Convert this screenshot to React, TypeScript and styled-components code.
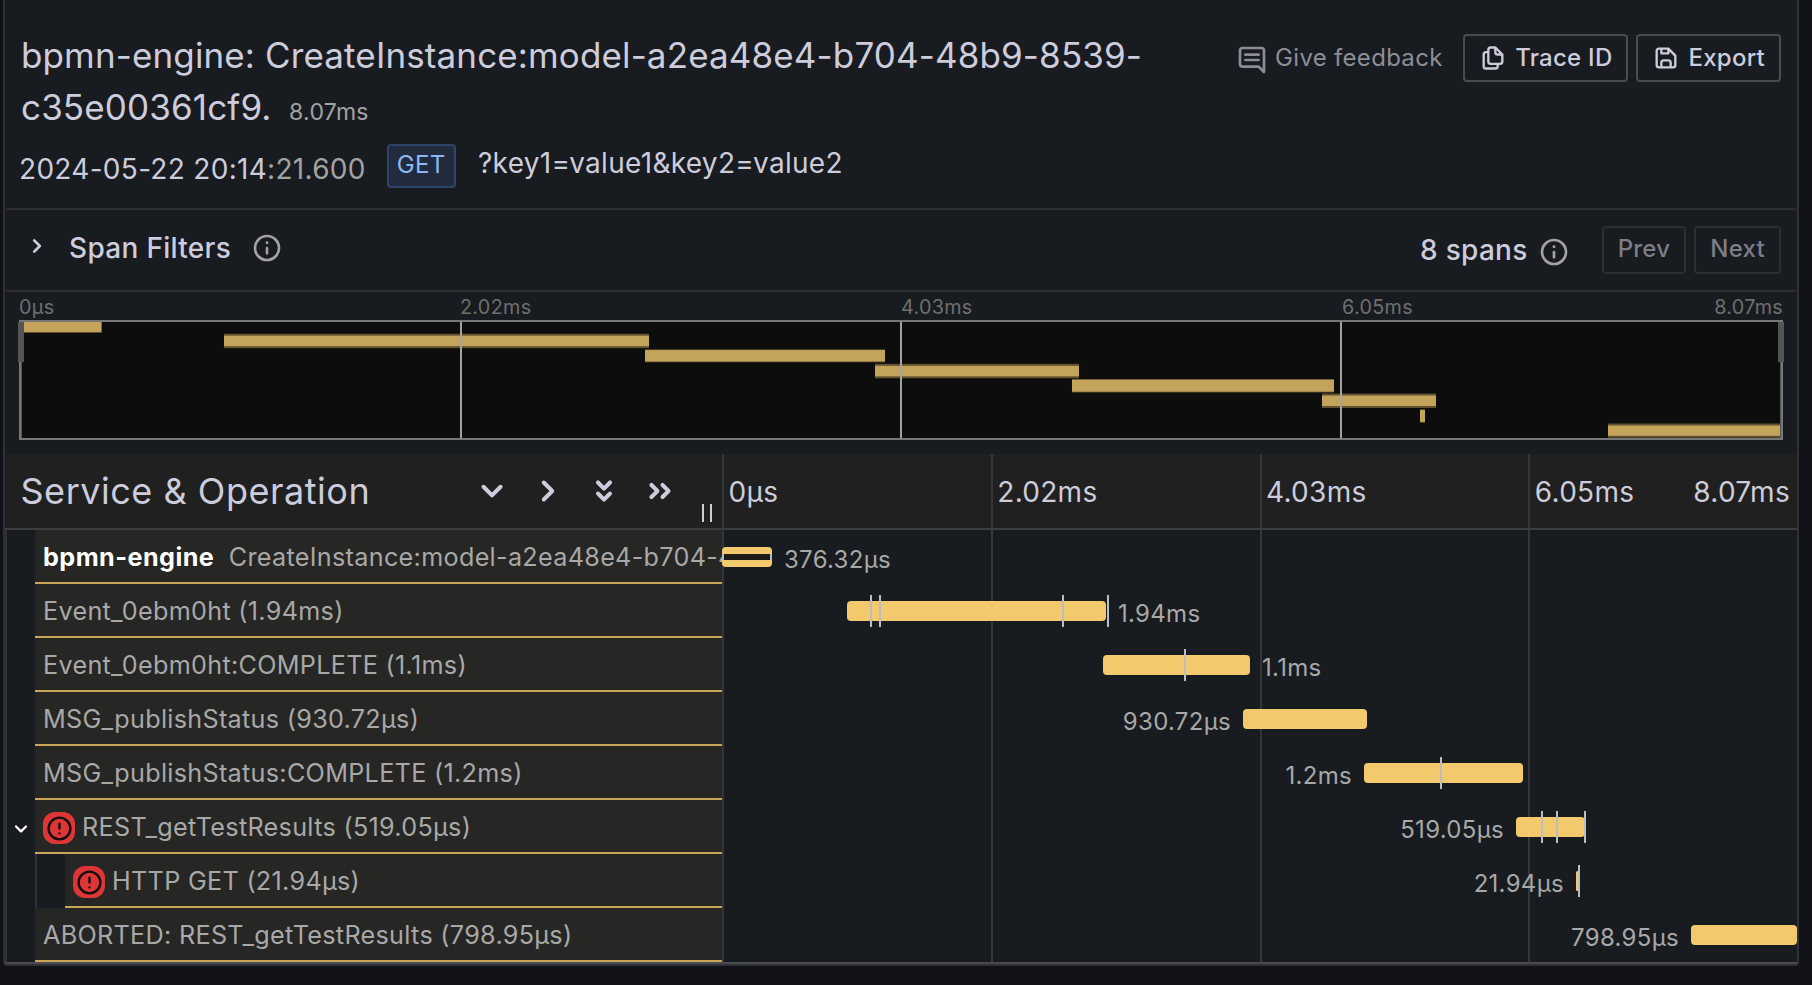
import React from 'react';
import styled, { createGlobalStyle, css } from 'styled-components';

const color = {
  canvas: '#111217',
  panel: '#181b1f',
  border: '#2e3036',
  text: '#ccccdc',
  textSecondary: '#8c8d98',
  muted: '#a3a3a3',
  faint: '#6f6f6f',
  span: '#f2c96d',
  rowBg: '#262624',
  rowLine: '#c9a55a',
  grid: '#353637',
};

const GlobalStyle = createGlobalStyle`
  *, *::before, *::after { box-sizing: border-box; }
  body {
    margin: 0;
    background: ${color.canvas};
    color: ${color.text};
    font-family: Inter, "Liberation Sans", sans-serif;
    font-size: 28px;
    letter-spacing: 0.3px;
    overflow: hidden;
  }
`;

/* ---------- icons ---------- */

const paths = {
  message:
    'M17,7H7A1,1,0,0,0,7,9H17a1,1,0,0,0,0-2Zm0,4H7a1,1,0,0,0,0,2H17a1,1,0,0,0,0-2Zm2-9H5A3,3,0,0,0,2,5V15a3,3,0,0,0,3,3H16.59l3.7,3.71A1,1,0,0,0,21,22a.84.84,0,0,0,.38-.08A1,1,0,0,0,22,21V5A3,3,0,0,0,19,2Zm1,16.59-2.29-2.3A1,1,0,0,0,17,16H5a1,1,0,0,1-1-1V5A1,1,0,0,1,5,4H19a1,1,0,0,1,1,1Z',
  copy:
    'M21,8.94a1.31,1.31,0,0,0-.06-.27l0-.09a1.07,1.07,0,0,0-.19-.28h0l-6-6h0a1.07,1.07,0,0,0-.28-.19.32.32,0,0,0-.09,0A.88.88,0,0,0,14.05,2H10A3,3,0,0,0,7,5V6H6A3,3,0,0,0,3,9V19a3,3,0,0,0,3,3h8a3,3,0,0,0,3-3V18h1a3,3,0,0,0,3-3V9S21,9,21,8.94ZM15,5.41,17.59,8H16a1,1,0,0,1-1-1ZM15,19a1,1,0,0,1-1,1H6a1,1,0,0,1-1-1V9A1,1,0,0,1,6,8H7v7a3,3,0,0,0,3,3h5Zm4-4a1,1,0,0,1-1,1H10a1,1,0,0,1-1-1V5a1,1,0,0,1,1-1h3V7a3,3,0,0,0,3,3h3Z',
  save:
    'M20.71,9.29l-6-6a1,1,0,0,0-.32-.21A1.09,1.09,0,0,0,14,3H6A3,3,0,0,0,3,6V18a3,3,0,0,0,3,3H18a3,3,0,0,0,3-3V10A1,1,0,0,0,20.71,9.29ZM9,5h4V7H9Zm6,14H9V16a1,1,0,0,1,1-1h4a1,1,0,0,1,1,1Zm4-1a1,1,0,0,1-1,1H17V16a3,3,0,0,0-3-3H10a3,3,0,0,0-3,3v3H6a1,1,0,0,1-1-1V6A1,1,0,0,1,6,5H7V8A1,1,0,0,0,8,9h6a1,1,0,0,0,1-1V6.41l4,4Z',
  info:
    'M12,2A10,10,0,1,0,22,12,10,10,0,0,0,12,2Zm0,18a8,8,0,1,1,8-8A8,8,0,0,1,12,20Zm0-9a1,1,0,0,0-1,1v4a1,1,0,0,0,2,0V12A1,1,0,0,0,12,11Zm0-4a1.1,1.1,0,1,0,1.1,1.1A1.1,1.1,0,0,0,12,7Z',
  exclamation:
    'M12,2A10,10,0,1,0,22,12,10,10,0,0,0,12,2Zm0,18a8,8,0,1,1,8-8A8,8,0,0,1,12,20ZM12,7a1,1,0,0,0-1,1v4a1,1,0,0,0,2,0V8A1,1,0,0,0,12,7Zm0,8a1,1,0,1,0,1,1A1,1,0,0,0,12,15Z',
  angleDown:
    'M17,9.17a1,1,0,0,0-1.41,0L12,12.71,8.46,9.17a1,1,0,0,0-1.41,0,1,1,0,0,0,0,1.42l4.24,4.24a1,1,0,0,0,1.42,0L17,10.59A1,1,0,0,0,17,9.17Z',
  angleRight:
    'M14.83,11.29,10.59,7.05a1,1,0,0,0-1.42,0,1,1,0,0,0,0,1.41L12.71,12,9.17,15.54a1,1,0,0,0,0,1.41,1,1,0,0,0,.71.29,1,1,0,0,0,.71-.29l4.24-4.24A1,1,0,0,0,14.83,11.29Z',
  doubleDown:
    'M11.29,11.46a1,1,0,0,0,1.42,0l3-3A1,1,0,1,0,14.29,7L12,9.34,9.71,7A1,1,0,1,0,8.29,8.46Zm3,1.08L12,14.84l-2.29-2.3A1,1,0,0,0,8.29,14l3,3a1,1,0,0,0,1.42,0l3-3a1,1,0,0,0-1.42-1.42Z',
  doubleRight:
    'M8.46,8.29A1,1,0,1,0,7,9.71L9.34,12,7,14.29a1,1,0,1,0,1.42,1.42l3-3a1,1,0,0,0,0-1.42Zm8.5,3-3-3a1,1,0,1,0-1.42,1.42L14.84,12l-2.3,2.29a1,1,0,0,0,0,1.42,1,1,0,0,0,1.42,0l3-3A1,1,0,0,0,17,11.29Z',
};

const Svg = styled.svg`
  display: block;
  flex: none;
  fill: currentColor;
`;

function Icon({ name, size, className }: { name: keyof typeof paths; size: number; className?: string }) {
  return (
    <Svg className={className} width={size} height={size} viewBox="0 0 24 24" aria-hidden="true">
      <path d={paths[name]} />
    </Svg>
  );
}

/* ---------- panel and header ---------- */

const Panel = styled.main`
  width: 1796px;
  height: 966px;
  margin-left: 3px;
  border: 2px solid ${color.border};
  border-top: 0;
  border-radius: 0 0 4px 4px;
  background: ${color.panel};
`;

const Header = styled.header`
  display: flex;
  justify-content: space-between;
  height: 208px;
  padding: 29px 16px 0 14px;
`;

const Heading = styled.div`
  width: 1170px;
`;

const Title = styled.h1`
  margin: 0 0 0 2px;
  font-size: 35px;
  font-weight: 400;
  line-height: 52px;
  letter-spacing: 0.13px;
`;

const TotalDuration = styled.small`
  margin-left: 17.5px;
  font-size: 23px;
  letter-spacing: 0.3px;
  color: ${color.muted};
`;

const Meta = styled.div`
  display: flex;
  align-items: flex-start;
  margin-top: 3px;
  line-height: 44px;
`;

const Timestamp = styled.time`
  margin-top: 6px;
`;

const Seconds = styled.span`
  color: ${color.muted};
`;

const MethodBadge = styled.span`
  height: 44px;
  margin: 3px 22.5px 0 21px;
  padding: 1px 8px 0;
  border: 2px solid #2e4468;
  border-radius: 4px;
  background: #212b3d;
  color: #8ab8f5;
  font-size: 24px;
  line-height: 36px;
`;

const Actions = styled.div`
  display: flex;
  align-items: flex-start;
  gap: 8px;
  padding-top: 5px;
`;

const FeedbackLink = styled.a`
  display: flex;
  align-items: center;
  gap: 7px;
  height: 48px;
  margin-right: 12.5px;
  color: ${color.textSecondary};
  font-size: 24px;
  line-height: 46px;
  svg { margin-top: 4px; }
`;

const Button = styled.button<{ $disabled?: boolean }>`
  display: flex;
  align-items: center;
  gap: 8px;
  height: 48px;
  padding: 0 14px;
  border: 2px solid ${(p) => (p.$disabled ? '#2c2e34' : '#4a4b52')};
  border-radius: 4px;
  background: transparent;
  color: ${(p) => (p.$disabled ? '#7c7d87' : color.text)};
  font: 500 24px/42px Inter, sans-serif;
  letter-spacing: 0.25px;
  span { padding-bottom: ${(p) => (p.$disabled ? '2px' : '0')}; }
`;

/* ---------- span filters ---------- */

const Filters = styled.section`
  display: flex;
  align-items: center;
  justify-content: space-between;
  height: 84px;
  padding: 0 16px;
  border: solid ${color.border};
  border-width: 2px 0;
  border-radius: 4px;
`;

const FilterToggle = styled.div`
  display: flex;
  align-items: center;
  margin-bottom: 5px;
  font-weight: 500;
  line-height: 40px;
`;

const ToggleChevron = styled(Icon)`
  margin: 0 16px 3px 0;
`;

const FilterInfo = styled(Icon)`
  margin-left: 20px;
  color: ${color.muted};
`;

const SpanNav = styled.div`
  display: flex;
  align-items: center;
  gap: 8px;
`;

const SpanCount = styled.div`
  display: flex;
  align-items: center;
  gap: 10px;
  margin-right: 24px;
  font-weight: 500;
  line-height: 48px;
  svg { margin-top: 4px; color: ${color.muted}; }
`;

/* ---------- minimap ---------- */

const Minimap = styled.section`
  height: 162px;
  padding: 0 14px;
`;

const MinimapLabels = styled.div`
  display: flex;
  height: 28px;
  color: ${color.faint};
  font-size: 19.8px;
  line-height: 30px;
`;

const Quarter = styled.div`
  display: flex;
  flex: 1 1 0;
  justify-content: space-between;
`;

const MinimapCanvas = styled.svg`
  display: block;
  width: 1764px;
  height: 120px;
  overflow: visible;
`;

const minimapBars = [
  { x: 24, end: 101.5, y: 322, h: 11, soft: 1 },
  { x: 224, end: 649, y: 333.7, h: 14.5, soft: 2.5 },
  { x: 645, end: 885, y: 349.3, h: 13, soft: 1 },
  { x: 875, end: 1079, y: 363.8, h: 14.5, soft: 2.5 },
  { x: 1072, end: 1334, y: 379, h: 13.5, soft: 1 },
  { x: 1322, end: 1436, y: 393.5, h: 14.5, soft: 2.5 },
  { x: 1420, end: 1425, y: 409.2, h: 13.5, soft: 1 },
  { x: 1608, end: 1780, y: 423.5, h: 14.3, soft: 2.5 },
];

function MinimapGraph() {
  return (
    <MinimapCanvas viewBox="19 320 1764 120">
      <rect x="19" y="320" width="1764" height="120" fill="#777" />
      <rect x="21" y="322" width="1760" height="116" fill="#0d0d0d" />
      {minimapBars.map((b) => (
        <g key={b.x} fill="#c4a35b">
          <rect x={b.x} y={b.y} width={b.end - b.x} height={b.h} opacity="0.45" />
          <rect
            x={b.x}
            y={b.y === 322 ? 322 : b.y + b.soft * 0.8}
            width={b.end - b.x}
            height={b.h - (b.y === 322 ? b.soft : 1.6 * b.soft)}
          />
        </g>
      ))}
      {[460, 900, 1340].map((x) => (
        <rect key={x} x={x} y="322" width="2" height="116" fill="#a3a3a3" />
      ))}
      <rect x="21" y="322" width="1" height="116" fill="#555" />
      <rect x="1780" y="322" width="1" height="116" fill="#555" />
      <rect x="18" y="322" width="6" height="40" fill="#555" />
      <rect x="1778" y="322" width="6" height="40" fill="#555" />
    </MinimapCanvas>
  );
}

/* ---------- timeline table ---------- */

const nameColumn = css`
  flex: none;
  width: 717px;
`;

const TableHeader = styled.div`
  display: flex;
  height: 76px;
  border-bottom: 2px solid #3d3d3f;
  background: #202020;
`;

const NameHeader = styled.div`
  ${nameColumn}
  display: flex;
  align-items: center;
  justify-content: space-between;
  padding: 0 10px 0 15.5px;
`;

const NameTitle = styled.h2`
  margin: 0;
  font-size: 36px;
  font-weight: 400;
  letter-spacing: 0.52px;
  line-height: 60px;
`;

const CollapseControls = styled.div`
  display: flex;
  align-items: center;
  align-self: stretch;
  gap: 8px;
`;

const ResizeGrip = styled.div`
  align-self: flex-end;
  width: 10px;
  height: 18px;
  margin: 0 0 6px 10px;
  border: solid #cfcfcf;
  border-width: 0 2px;
`;

const TickHeaders = styled.div`
  display: flex;
  flex: 1;
`;

const TickHeader = styled(Quarter)`
  align-items: center;
  padding: 1px 7px 0 4.5px;
  border-left: 2px solid ${color.grid};
`;

const Row = styled.div`
  display: flex;
  height: 54px;
`;

const NameCell = styled.div`
  ${nameColumn}
  display: flex;
`;

const IndentGuide = styled.div`
  display: flex;
  flex: none;
  align-items: center;
  justify-content: center;
  width: 30px;
  padding: 4px 0 0;
  border-left: 2px solid #303134;
  color: #fff;
`;

const SpanName = styled.div`
  display: flex;
  flex: 1;
  min-width: 0;
  align-items: center;
  overflow: hidden;
  padding: 2px 0 0 8px;
  border-bottom: 2px solid ${color.rowLine};
  background: ${color.rowBg};
  color: #a8a8a8;
  font-size: 25.2px;
  line-height: 50px;
  white-space: nowrap;
`;

const ServiceName = styled.strong`
  margin-right: 14.5px;
  color: #fff;
  font-weight: 700;
  letter-spacing: 0.45px;
`;

const ErrorBadge = styled.span`
  display: flex;
  flex: none;
  align-items: center;
  justify-content: center;
  width: 32px;
  height: 32px;
  margin: 2px 7px 0 0;
  border-radius: 12px;
  background: #de3636;
  color: #140d0d;
`;

const Timeline = styled.div`
  position: relative;
  display: flex;
  flex: 1;
`;

const GridCell = styled.div`
  flex: 1 1 0;
  border-left: 2px solid ${color.grid};
`;

const SpanBar = styled.div`
  position: absolute;
  top: 17px;
  height: 20px;
  border-radius: 4px;
  background: ${color.span};
`;

const CriticalPath = styled.div`
  height: 6px;
  margin-top: 7px;
  border: solid #b7babd;
  border-width: 0 2px;
  background: #1c1b18;
`;

const EventMark = styled.div`
  position: absolute;
  top: 11px;
  width: 2px;
  height: 32px;
  background: #b9bfc3;
`;

const BarLabel = styled.div<{ $side: 'left' | 'right' }>`
  position: absolute;
  top: 0;
  color: #a8a8a8;
  font-size: 24px;
  line-height: 60px;
  white-space: nowrap;
  ${(p) => (p.$side === 'left' ? 'padding-right: 12px;' : 'padding-left: 12px;')}
`;

const TableEnd = styled.div`
  height: 2px;
  background: #4b4c4f;
`;

interface Span {
  name: string;
  service?: string;
  depth?: number;
  error?: boolean;
  expanded?: boolean;
  critical?: boolean;
  start: number;
  end: number;
  label: string;
  side: 'left' | 'right';
  events?: number[];
}

/* start, end and events are offsets on the 1075-unit wide timeline */
const TIMELINE = 1075;
const spans: Span[] = [
  { service: 'bpmn-engine', name: 'CreateInstance:model-a2ea48e4-b704-48b9-8539-c35e00361cf9', start: 0, end: 50, label: '376.32µs', side: 'right', critical: true },
  { name: 'Event_0ebm0ht (1.94ms)', start: 125, end: 384, label: '1.94ms', side: 'right', events: [148, 157, 340, 385] },
  { name: 'Event_0ebm0ht:COMPLETE (1.1ms)', start: 381, end: 528, label: '1.1ms', side: 'right', events: [462] },
  { name: 'MSG_publishStatus (930.72µs)', start: 521, end: 645, label: '930.72µs', side: 'left' },
  { name: 'MSG_publishStatus:COMPLETE (1.2ms)', start: 642, end: 801, label: '1.2ms', side: 'left', events: [718] },
  { name: 'REST_getTestResults (519.05µs)', start: 794, end: 863, label: '519.05µs', side: 'left', error: true, expanded: true, events: [819, 834, 862] },
  { name: 'HTTP GET (21.94µs)', depth: 1, start: 854, end: 857, label: '21.94µs', side: 'left', error: true, events: [856] },
  { name: 'ABORTED: REST_getTestResults (798.95µs)', start: 969, end: 1075, label: '798.95µs', side: 'left' },
];

const pct = (v: number) => `${(v / TIMELINE) * 100}%`;

function SpanRow({ span }: { span: Span }) {
  return (
    <Row>
      <NameCell>
        <IndentGuide>{span.expanded && <Icon name="angleDown" size={28} />}</IndentGuide>
        {span.depth ? <IndentGuide /> : null}
        <SpanName>
          {span.error && (
            <ErrorBadge>
              <Icon name="exclamation" size={29} />
            </ErrorBadge>
          )}
          {span.service && <ServiceName>{span.service}</ServiceName>}
          <span>{span.name}</span>
        </SpanName>
      </NameCell>
      <Timeline>
        <GridCell />
        <GridCell />
        <GridCell />
        <GridCell />
        <SpanBar style={{ left: pct(span.start), width: pct(span.end - span.start) }}>
          {span.critical && <CriticalPath />}
        </SpanBar>
        {span.events?.map((e) => <EventMark key={e} style={{ left: pct(e) }} />)}
        <BarLabel
          $side={span.side}
          style={span.side === 'right' ? { left: pct(span.end) } : { right: pct(TIMELINE - span.start) }}
        >
          {span.label}
        </BarLabel>
      </Timeline>
    </Row>
  );
}

const ticks = ['0µs', '2.02ms', '4.03ms', '6.05ms'];
const total = '8.07ms';

export default function App() {
  return (
    <>
      <GlobalStyle />
      <Panel>
        <Header>
          <Heading>
            <Title>
              bpmn-engine: CreateInstance:model-a2ea48e4-b704-48b9-8539-c35e00361cf9.
              <TotalDuration>{total}</TotalDuration>
            </Title>
            <Meta>
              <Timestamp>
                2024-05-22 20:14<Seconds>:21.600</Seconds>
              </Timestamp>
              <MethodBadge>GET</MethodBadge>
              <span>?key1=value1&amp;key2=value2</span>
            </Meta>
          </Heading>
          <Actions>
            <FeedbackLink>
              <Icon name="message" size={32} />
              Give feedback
            </FeedbackLink>
            <Button>
              <Icon name="copy" size={28} />
              <span>Trace ID</span>
            </Button>
            <Button>
              <Icon name="save" size={28} />
              <span>Export</span>
            </Button>
          </Actions>
        </Header>

        <Filters>
          <FilterToggle>
            <ToggleChevron name="angleRight" size={32} />
            Span Filters
            <FilterInfo name="info" size={32} />
          </FilterToggle>
          <SpanNav>
            <SpanCount>
              8 spans
              <Icon name="info" size={32} />
            </SpanCount>
            <Button $disabled>
              <span>Prev</span>
            </Button>
            <Button $disabled>
              <span>Next</span>
            </Button>
          </SpanNav>
        </Filters>

        <Minimap>
          <MinimapLabels>
            {ticks.map((t, i) => (
              <Quarter key={t}>
                <span>{t}</span>
                {i === 3 && <span>{total}</span>}
              </Quarter>
            ))}
          </MinimapLabels>
          <MinimapGraph />
        </Minimap>

        <TableHeader>
          <NameHeader>
            <NameTitle>Service &amp; Operation</NameTitle>
            <CollapseControls>
              <Icon name="angleDown" size={48} />
              <Icon name="angleRight" size={48} />
              <Icon name="doubleDown" size={48} />
              <Icon name="doubleRight" size={48} />
              <ResizeGrip />
            </CollapseControls>
          </NameHeader>
          <TickHeaders>
            {ticks.map((t, i) => (
              <TickHeader key={t}>
                <span>{t}</span>
                {i === 3 && <span>{total}</span>}
              </TickHeader>
            ))}
          </TickHeaders>
        </TableHeader>

        {spans.map((s) => (
          <SpanRow key={s.name} span={s} />
        ))}
        <TableEnd />
      </Panel>
    </>
  );
}
